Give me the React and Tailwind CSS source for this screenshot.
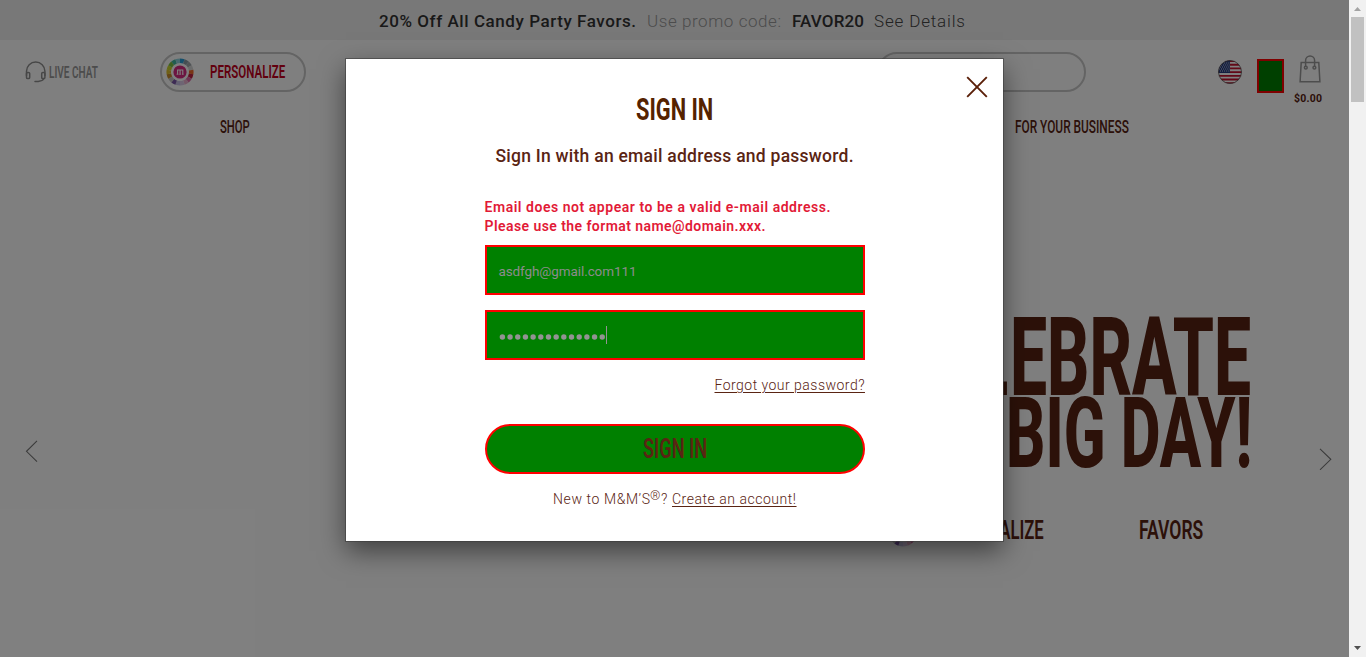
import { useLayoutEffect, useRef } from "react";

// Condensed text: glyphs are scaled horizontally to fill the width of the box.
function Condensed({ className = "", children }) {
  const box = useRef(null);
  const text = useRef(null);
  useLayoutEffect(() => {
    const ratio = box.current.clientWidth / text.current.offsetWidth;
    text.current.style.transform = `scaleX(${ratio})`;
  }, []);
  return (
    <span ref={box} className={`block shrink-0 whitespace-nowrap ${className}`}>
      <span ref={text} className="inline-block origin-left align-top">{children}</span>
    </span>
  );
}

// Tracked text: letter spacing is spread evenly to fill the width of the box.
function Tracked({ className = "", textClassName = "", as: Tag = "span", children }) {
  const box = useRef(null);
  const text = useRef(null);
  useLayoutEffect(() => {
    const count = text.current.textContent.length;
    const gap = (box.current.clientWidth - text.current.getBoundingClientRect().width) / (count - 1);
    text.current.style.letterSpacing = `${gap}px`;
  }, []);
  return (
    <Tag ref={box} className={`block shrink-0 whitespace-nowrap ${className}`}>
      <span ref={text} className={`inline-block align-top ${textClassName}`}>{children}</span>
    </Tag>
  );
}

const WHEEL = ["#2a9fd8", "#8a9aa6", "#a3a9ad", "#d6d6d6", "#f26a2a", "#c2213f", "#e06aa8", "#eab0cf", "#dccbe8", "#c9c2e6", "#7a56a8", "#c4c4c4", "#c98d2c", "#e0c02c", "#cbd52c", "#7cc242", "#43b8a0", "#8fd4e0"];

function Wheel({ className }) {
  return (
    <svg viewBox="0 0 28 28" className={className}>
      {WHEEL.map((color, i) => {
        const a = (i * 20 * Math.PI) / 180;
        const b = ((i + 1) * 20 * Math.PI) / 180;
        const p = (r, t) => `${14 + r * Math.sin(t)} ${14 - r * Math.cos(t)}`;
        return <path key={color + i} fill={color} d={`M${p(13.6, a)}A13.6 13.6 0 0 1 ${p(13.6, b)}L${p(9, b)}A9 9 0 0 0 ${p(9, a)}Z`} />;
      })}
      <circle cx="14" cy="14" r="6.6" fill="#d92b82" />
      <path d="M11.6 16.300v-4.300M11 12h5.800V16.300M14.100 12V16.300M10.600 16.300h1.900M13.200 16.300h1.700M15.900 16.300h1.700" fill="none" stroke="#fff" strokeWidth="1.100" />
    </svg>
  );
}

function Flag() {
  return (
    <svg viewBox="0 0 24 24" className="h-6 w-6 shrink-0">
      <defs><clipPath id="disc"><circle cx="12" cy="12" r="11.5" /></clipPath></defs>
      <g clipPath="url(#disc)">
        <path fill="#fff" d="M0 0h24v24H0z" />
        <path stroke="#c4122f" strokeWidth="1.85" d="M0 1h24M0 4.7h24M0 8.4h24M0 12.1h24M0 15.8h24M0 19.5h24M0 23.2h24" />
        <path fill="#263c80" d="M0 0h12v13H0z" />
        <path stroke="#fff" strokeWidth="0.9" strokeDasharray="0.9 1.2" d="M2 3h10M1 5h11M2 7h10M1 9h11M2 11h10" />
      </g>
      <circle cx="12" cy="12" r="11.5" fill="none" stroke="#555" strokeWidth="0.8" />
    </svg>
  );
}

function Headset() {
  return (
    <svg viewBox="0 0 22 22" className="h-[22px] w-[22px] shrink-0" fill="none" stroke="#8f8f8f" strokeWidth="1.500" strokeLinecap="round" strokeLinejoin="round">
      <path d="M1.500 14.500V10.200a9.200 9.200 0 0 1 18.400 0v4.300" />
      <path d="M1.500 12.500q0-1 1.200-1h.8q1.200 0 1.200 1v4q0 1.100-1.200 1.100h-.8q-1.200 0-1.200-1.100zM16.700 12.500q0-1 1.100-1h.9q1.200 0 1.200 1v4q0 1.100-1.200 1.100h-.9q-1.100 0-1.100-1.100z" />
      <path d="M18.600 18c-.8 1.700-2.600 2-4.600 2.200M10 20.500h3.500" />
    </svg>
  );
}

function Bag() {
  return (
    <svg viewBox="0 0 22 28" className="h-7 w-[22px]" fill="none" stroke="#9a9a9a" strokeWidth="1.5">
      <path d="M2.200 7.600h17.600l1.100 19.200H1.100z" />
      <path d="M6.600 11.400V5.400a4.500 4.500 0 0 1 9 0v6" />
      <circle cx="6.800" cy="12.700" r="1.400" />
      <circle cx="15.400" cy="12.700" r="1.400" />
    </svg>
  );
}

function PageBehind() {
  return (
    <div className="flex h-full w-full flex-col bg-white text-[#582212]">
      <div className="flex h-10 shrink-0 items-center bg-[#f1f1f1] pl-[379px] pt-0.5 text-[17px] leading-5 text-[#444]">
        <Tracked className="w-[257px] font-medium text-[#333]">20% Off All Candy Party Favors.</Tracked>
        <Tracked className="ml-[11px] w-[134px] font-light text-[#999]">Use promo code:</Tracked>
        <Tracked className="ml-[11px] w-[72px] font-medium text-[#333]">FAVOR20</Tracked>
        <Tracked className="ml-[10px] w-[91px] font-light">See Details</Tracked>
      </div>

      <header className="flex h-[70px] shrink-0 items-start pl-[25px] pt-3">
        <div className="flex h-10 items-center text-[17px] font-semibold leading-5 text-[#999]">
          <Headset />
          <Condensed className="ml-0.5 w-[49px]">LIVE CHAT</Condensed>
        </div>
        <div className="ml-[62px] flex h-10 w-[146px] items-center rounded-full border-2 border-[#c8c8c8] pl-1 text-[18px] font-semibold leading-5 text-[#c4001c]">
          <Wheel className="h-7 w-7" />
          <Condensed className="ml-4 w-[75px]">PERSONALIZE</Condensed>
        </div>
        <div className="ml-[571px] h-10 w-[209px] rounded-full border-2 border-[#c8c8c8]" />
        <div className="ml-[132px] flex h-10 items-center"><Flag /></div>
        <div className="ml-[15px] mt-[7px] h-[34px] w-[27px] border-2 border-[#ff0000] bg-[#008000]" />
        <div className="ml-[10px] mt-[3px] flex flex-col items-center">
          <div className="pl-[3px]"><Bag /></div>
          <Tracked className="mt-2.5 w-7 text-[10.5px] font-bold leading-3">$0.00</Tracked>
        </div>
      </header>

      <nav className="flex h-8 shrink-0 items-center pl-[220px] pt-0.5 text-[18px] font-medium leading-6">
        <Condensed className="w-[30px]">SHOP</Condensed>
        <Condensed className="ml-[765px] w-[114px]">FOR YOUR BUSINESS</Condensed>
      </nav>

      <section className="flex grow items-start justify-between pl-[25px] pr-[17px]">
        <svg viewBox="0 0 13 22" className="mt-[298px] h-[22px] w-[13px]" fill="none" stroke="#777" strokeWidth="1.1"><path d="M12 .8 1.5 11.3 12 21.6" /></svg>
        <div className="ml-auto mr-[67px] flex flex-col items-end pt-[177px] font-extrabold">
          <div className="flex h-[79px] items-center pr-px text-[109px] leading-[79px]">
            <Condensed className="mr-[2px] w-[31px]">L</Condensed>
            <Condensed className="w-[241px]">EBRATE</Condensed>
          </div>
          <div className="flex h-[71px] items-center text-[98px] leading-[71px]">
            <Condensed className="w-[246px]">BIG DAY!</Condensed>
          </div>
          <div className="mr-[49px] mt-[47px] flex h-[34px] items-start text-[26px] font-semibold leading-[28px]">
            <Wheel className="mt-[3px] h-7 w-7" />
            <Condensed className="ml-[18px] w-[109px]">PERSONALIZE</Condensed>
            <Condensed className="ml-[95px] w-[64px]">FAVORS</Condensed>
          </div>
        </div>
        <svg viewBox="0 0 13 22" className="mt-[306px] h-[22px] w-[13px]" fill="none" stroke="#777" strokeWidth="1.1"><path d="M1 .8 11.8 11.3 1 21.8" /></svg>
      </section>
    </div>
  );
}

function SignInDialog() {
  return (
    <div role="dialog" className="relative flex h-[482px] w-[657px] flex-col items-center bg-white pt-[34px] text-[#5a2413] shadow-[0_0_0_1px_rgba(60,60,60,0.6),0_10px_25px_rgba(0,0,0,0.5)]">
      <button aria-label="Close" className="absolute right-[15px] top-[17px]">
        <svg viewBox="0 0 22 22" className="h-[22px] w-[22px]" stroke="#5a1f08" strokeWidth="1.9"><path d="M1.2 1.2 20.8 20.8M20.8 1.2 1.2 20.8" /></svg>
      </button>
      <Condensed className="w-[77px] text-[32px] font-bold leading-8 text-[#552200]">SIGN IN</Condensed>
      <Tracked className="mt-[19px] w-[358px] text-[17.5px] font-medium leading-6">Sign In with an email address and password.</Tracked>

      <form className="mt-[30px] flex w-[380px] flex-col" onSubmit={(e) => e.preventDefault()}>
        <div className="text-[14px] font-semibold leading-[19px] text-[#e21a37]">
          <Tracked className="w-[346px]">Email does not appear to be a valid e-mail address.</Tracked>
          <Tracked className="w-[281px]">Please use the format name@domain.xxx.</Tracked>
        </div>
        <div className="mt-[9px] flex h-[50px] items-center border-2 border-[#ff0000] bg-[#008000] pl-3 pt-0.5 text-[13.5px] text-[#8c8c8c]">
          <Tracked className="w-[138px]">asdfgh@gmail.com111</Tracked>
        </div>
        <div className="mt-[15px] flex h-[50px] items-center border-2 border-[#ff0000] bg-[#008000] pl-3">
          <svg viewBox="0 0 107 6" className="mt-[3px] h-1.5 w-[107px]" fill="#939393">
            {Array.from({ length: 14 }, (_, i) => <circle key={i} cx={3.4 + i * 7.68} cy="3" r="2.7" />)}
          </svg>
          <span className="h-[18px] w-px bg-[#939393]" />
        </div>
        <Tracked as="a" className="mt-[15px] w-[150px] self-end text-[14px] font-light leading-5" textClassName="underline underline-offset-2">Forgot your password?</Tracked>
        <button className="mt-[29px] flex h-[50px] items-center justify-center rounded-full border-2 border-[#ff0000] bg-[#008000] text-[27px] font-semibold leading-8">
          <Condensed className="w-[64px] text-left">SIGN IN</Condensed>
        </button>
      </form>

      <div className="mt-[15px] flex w-[243px] text-[14px] font-light leading-5">
        <Tracked className="w-[97px]">New to M&amp;M’S</Tracked>
        <span className="-mt-[3px] w-[11px] text-[13px]">®</span>
        <span>?</span>
        <Tracked as="a" className="ml-auto w-[124px]" textClassName="underline underline-offset-2">Create an account!</Tracked>
      </div>
    </div>
  );
}

function Scrollbar() {
  return (
    <div className="flex h-full w-[17px] shrink-0 flex-col items-center justify-between bg-[#f1f1f1]">
      <div className="flex flex-col items-center">
        <svg viewBox="0 0 17 17" className="h-[17px] w-[17px]" fill="#a3a3a3"><path d="M8.5 7 12 11H5z" /></svg>
        <div className="h-[85px] w-[13px] bg-[#c1c1c1]" />
      </div>
      <svg viewBox="0 0 17 17" className="h-[17px] w-[17px]" fill="#505050"><path d="M5 6h7l-3.500 4z" /></svg>
    </div>
  );
}

export default function App() {
  return (
    <div className="flex h-[657px] w-[1366px] overflow-hidden font-[Roboto,'Liberation_Sans',sans-serif]">
      <main className="relative h-full w-[1349px] shrink-0 overflow-hidden">
        <PageBehind />
        <div className="absolute inset-0 flex items-start justify-center bg-black/50 pt-[59px]">
          <SignInDialog />
        </div>
      </main>
      <Scrollbar />
    </div>
  );
}
